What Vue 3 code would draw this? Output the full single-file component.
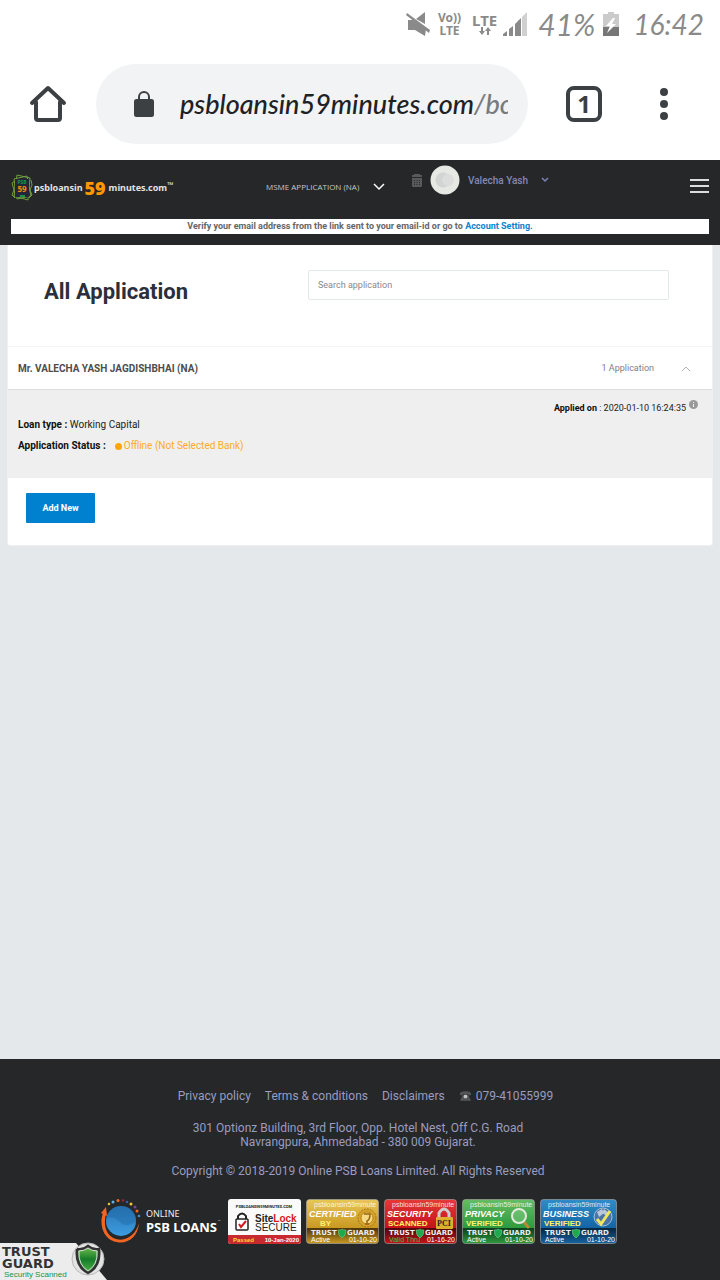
<script setup>
import { ref } from 'vue'

const query = ref('')
const expanded = ref(true)

const seals = [
  { id: 'cert', top: 'CERTIFIED', sub: 'BY', state: 'Active', date: '01-10-20', light: '#e9c659', mid: '#c99a22', dark: '#4d3508' },
  { id: 'sec', top: 'SECURITY', sub: 'SCANNED', state: 'Valid Thru', date: '01-16-20', light: '#e5393a', mid: '#c4131a', dark: '#4c0808' },
  { id: 'priv', top: 'PRIVACY', sub: 'VERIFIED', state: 'Active', date: '01-10-20', light: '#66bd65', mid: '#2f9a3e', dark: '#0b3f1d' },
  { id: 'biz', top: 'BUSINESS', sub: 'VERIFIED', state: 'Active', date: '01-10-20', light: '#2f8dc9', mid: '#1565a3', dark: '#08263f' },
]
</script>

<template>
  <div class="screen">
    <div class="status">
      <svg width="24" height="24" viewBox="0 0 24 24" aria-label="Muted" fill="#8a8a8a">
        <path d="M10 7 19 0v12z" />
        <path d="M2 8h5l13 9-1 7-10-6H2z" />
        <path d="m0 3 1-2 23 17-1 3z" />
      </svg>
      <div class="volte"><span>Vo))</span><span>LTE</span></div>
      <div class="lte">
        <span>LTE</span>
        <svg width="14" height="8" viewBox="0 0 14 8"><path d="M3 0h2v4h2L4 8 1 4h2zM9 8h2V4h2l-3-4-3 4h2z" fill="#8a8a8a" /></svg>
      </div>
      <svg class="signal" width="24" height="24" viewBox="0 0 24 24">
        <path d="M0 24v-2l4-3v5zM6 24v-7l4-3v10zM12 24V12l4-4v16z" fill="#8a8a8a" />
        <path d="M15 24V9l3-3v18z" fill="#8a8a8a" />
        <path d="M19 24V5l5-5v24z" fill="#d0d0d0" />
        <path d="M5 16v8M11 12v12" stroke="#fff" stroke-width="1.5" />
      </svg>
      <span class="hand percent">41%</span>
      <svg width="16" height="24" viewBox="0 0 16 24">
        <path d="M0 2h5V0h6v2h5v22H0z" fill="#cbcbcb" />
        <path d="M0 15h16v9H0z" fill="#777" />
        <path d="m10 6-7 8h4l-3 7 9-9H9l3-6z" fill="#fff" />
      </svg>
      <span class="hand clock">16:42</span>
    </div>

    <div class="toolbar">
      <button class="icon home" aria-label="Home">
        <svg width="40" height="40" viewBox="0 0 40 40" fill="none" stroke="#3c4043" stroke-width="4" stroke-linejoin="round" stroke-linecap="round">
          <path d="M8 18v16q0 2 2 2h20q2 0 2-2V18" /><path d="M4 19 20 4l16 15" />
        </svg>
      </button>
      <div class="omnibox">
        <svg width="20" height="26" viewBox="0 0 20 26"><rect y="8" width="20" height="18" rx="2.5" fill="#3c4043" /><path d="M5 9V6a5 5 0 0 1 10 0v3" fill="none" stroke="#3c4043" stroke-width="2" /></svg>
        <span class="url"><span>psbloansin59minutes.com</span><span class="path">/bo</span></span>
      </div>
      <button class="tabs" aria-label="Tabs">1</button>
      <button class="icon more" aria-label="More">
        <svg width="8" height="32" viewBox="0 0 8 32" fill="#3c4043"><circle cx="4" cy="4" r="4" /><circle cx="4" cy="16" r="4" /><circle cx="4" cy="28" r="4" /></svg>
      </button>
    </div>

    <header>
      <div class="nav">
        <a href="#" class="brand">
          <svg width="22" height="28" viewBox="0 0 22 28">
            <g fill="none" stroke="#6f9f3e"><path d="m3 5 13-3 4 20-14 3zM6 1l13 3-2 22-14-4z" /><path d="m1 9 3-2v17l-3-3 2-5zM20 6l1 5-2 5 2 5-3 3" /></g>
            <path d="M4 5h14v18H4z" fill="#24253b" />
            <text x="11" y="10" text-anchor="middle" font-size="5" fill="#179646">PSB</text>
            <text x="11" y="18" text-anchor="middle" font-size="8" font-weight="700" fill="#fb8c00">59</text>
            <path d="M9 22h5" stroke="#179646" stroke-width="2" />
          </svg>
          <span class="word">psbloansin</span><b>59</b><span class="word">minutes.com</span><sup>™</sup>
        </a>
        <button class="menu msme">
          <span>MSME APPLICATION (NA)</span>
          <svg width="12" height="8" viewBox="0 0 12 8" fill="none" stroke="#fff" stroke-width="1.500"><path d="m1 1 5 5 5-5" /></svg>
        </button>
        <div class="account">
          <svg width="10" height="13" viewBox="0 0 10 13"><path d="M2 0h6v1h2v2H0V1h2zM0 4h10v8q0 1-1 1H1q-1 0-1-1z" fill="#59595b" /><path d="M2 6.500h6M2 8.500h6M2 10.500h6" stroke="#2b2c2e" stroke-dasharray="1 1.500" /></svg>
          <svg width="30" height="30" viewBox="0 0 30 30"><circle cx="15" cy="15" r="14.500" fill="#e6e8e4" /><circle cx="13" cy="15" r="7.500" fill="#d2d3d3" /><circle cx="18" cy="15" r="6" fill="#dddcdd" /></svg>
          <button class="menu user">
            <span>Valecha Yash</span>
            <svg width="8" height="6" viewBox="0 0 8 6" fill="none" stroke="#7f82b5" stroke-width="1.500"><path d="m1 1 3 3 3-3" /></svg>
          </button>
        </div>
        <button class="burger" aria-label="Menu"><i></i><i></i><i></i></button>
      </div>
      <p class="notice">Verify your email address from the link sent to your email-id or go to <a href="#">Account Setting.</a></p>
    </header>

    <main>
      <section class="panel">
        <div class="head">
          <h1>All Application</h1>
          <input v-model="query" type="text" placeholder="Search application" aria-label="Search application" />
        </div>
        <div class="row">
          <h2>Mr. VALECHA YASH JAGDISHBHAI (NA)</h2>
          <span class="count">1 Application</span>
          <button class="icon" aria-label="Toggle applications" @click="expanded = !expanded">
            <svg width="10" height="7" viewBox="0 0 10 7" fill="none" stroke="#b5b5b5"><path d="m1 6 4-4 4 4" /></svg>
          </button>
        </div>
        <div v-if="expanded" class="detail">
          <p class="applied"><span><b>Applied on</b> : 2020-01-10 16:24:35</span>
            <svg width="9" height="9" viewBox="0 0 9 9"><circle cx="4.500" cy="4.500" r="4.500" fill="#999" /><path d="M4.500 2v1M4.500 4v3" stroke="#eee" /></svg>
          </p>
          <p class="loan"><b>Loan type :</b> Working Capital</p>
          <p class="state"><b>Application Status :</b><span class="offline"><i></i>Offline (Not Selected Bank)</span></p>
        </div>
        <div class="foot"><button class="add">Add New</button></div>
      </section>
    </main>

    <footer>
      <nav>
        <a href="#">Privacy policy</a><a href="#">Terms &amp; conditions</a><a href="#">Disclaimers</a>
        <a href="#" class="phone">
          <svg width="13" height="10" viewBox="0 0 14 10"><path d="M1 4Q0 0 7 0t6 4l-3 .5V3H4v1.500z" fill="#555" /><path d="M4 4h6l3 6H1z" fill="#555" /><circle cx="7" cy="5.500" r="2" fill="#c2c2c2" /></svg>079-41055999</a>
      </nav>
      <p class="address">301 Optionz Building, 3rd Floor, Opp. Hotel Nest, Off C.G. Road<br />Navrangpura, Ahmedabad - 380 009 Gujarat.</p>
      <p class="copy">Copyright © 2018-2019 Online PSB Loans Limited. All Rights Reserved</p>
      <div class="badges">
        <svg class="psb" width="123" height="46" viewBox="0 0 123 46">
          <defs><linearGradient id="globe" x2="0" y2="1"><stop stop-color="#2b75b5" /><stop offset="1" stop-color="#3c9ce0" /></linearGradient></defs>
          <circle cx="21" cy="22" r="15" fill="url(#globe)" />
          <path d="M6 19q9-2 14 4t16 0q1-12-9-15-17-3-21 11" fill="#1c659f" opacity=".4" />
          <path d="M3 14C-1 25 3 38 13 42c13 5 25-3 26-18-3 11-12 19-23 16C6 37 3 26 6 15z" fill="#f26522" />
          <path d="m1 14 5-6 1 9z" fill="#f26522" />
          <g><circle cx="9" cy="5" r="1.300" fill="#dec832" /><circle cx="13" cy="3" r="1.500" fill="#62b1de" /><circle cx="18" cy="1.500" r="1.500" fill="#f36d21" /><circle cx="23" cy="1.500" r="1.300" fill="#9d2335" /><circle cx="27" cy="3" r="1.300" fill="#2d61bf" /><circle cx="31" cy="5" r="1.500" fill="#efc931" /><circle cx="35" cy="8" r="1.500" fill="#7b419c" /><circle cx="37" cy="12" r="1.500" fill="#f26522" /><circle cx="39" cy="17" r="1.300" fill="#3991d2" /></g>
          <text x="46" y="18" class="t-online">ONLINE</text>
          <text x="46" y="33" class="t-psb">PSB LOANS</text>
          <text x="118" y="24" font-size="4" fill="#ddd">™</text>
        </svg>
        <svg width="73" height="45" viewBox="0 0 73 45">
          <defs><clipPath id="card"><rect width="73" height="45" rx="3" /></clipPath></defs>
          <g clip-path="url(#card)">
            <path d="M0 0h73v45H0z" fill="#fafafa" /><path d="M0 36h73v9H0z" fill="#c72a2f" />
          </g>
          <text x="36" y="9" text-anchor="middle" class="t-domain">PSBLOANSIN59MINUTES.COM</text>
          <rect x="8" y="20" width="12" height="11" rx="1" fill="#fff" stroke="#222" stroke-width="1.500" /><path d="M10 20v-3q4-5 8 0v3" fill="none" stroke="#222" stroke-width="2" /><path d="m11 25 2 3 5-6" fill="none" stroke="#d71920" stroke-width="2" />
          <text x="27" y="23" class="t-site">Site<tspan fill="#d71920">Lock</tspan></text>
          <text x="27" y="32" class="t-secure">SECURE</text>
          <text x="5" y="43" class="t-pass" fill="#ffd83b">Passed</text>
          <text x="71" y="43" text-anchor="end" class="t-pass" fill="#fff">10-Jan-2020</text>
        </svg>
        <svg v-for="s in seals" :key="s.id" :width="s.id === 'biz' ? 77 : 73" height="45" :viewBox="s.id === 'biz' ? '0 0 77 45' : '0 0 73 45'">
          <defs><linearGradient :id="s.id" x2="0" y2="1"><stop :stop-color="s.light" /><stop offset=".64" :stop-color="s.mid" /><stop offset=".66" :stop-color="s.dark" /><stop offset="1" :stop-color="s.mid" /></linearGradient></defs>
          <rect x=".5" y=".5" :width="s.id === 'biz' ? 76 : 72" height="44" rx="3" :fill="`url(#${s.id})`" stroke="#aaa" stroke-opacity=".6" />
          <text x="8" y="8" class="t-host">psbloansin59minute</text>
          <g v-if="s.id === 'cert'"><circle cx="61" cy="19" r="9" fill="#d5a22b" stroke="#a77412" stroke-dasharray="2 1" /><circle cx="61" cy="19" r="6" fill="#f5d985" stroke="#b98516" /><path d="M58 15h6q0 6-3 7v2M59 25h4" fill="none" stroke="#95640d" stroke-width="1.500" /></g>
          <g v-else-if="s.id === 'sec'"><path d="M55 20v-6q5-8 10 0v6" fill="none" stroke="#ccc" stroke-width="3" /><rect x="52" y="18" width="17" height="12" rx="1" fill="#ddb12f" /><text x="60" y="27" text-anchor="middle" class="t-pci">PCI</text></g>
          <g v-else-if="s.id === 'priv'"><path d="m62 23 5 6" stroke="#b78836" stroke-width="3" /><circle cx="57" cy="17" r="7" fill="#7fce83" fill-opacity=".5" stroke="#e4e9dd" stroke-width="2" /></g>
          <g v-else><circle cx="63" cy="18" r="9" fill="#4b75aa" stroke="#a8bfd6" /><path d="m57 13 5-3 2 4-5 4zM64 10l5 4-2 3-5-3z" fill="#b8c8d7" /><path d="m57 20 4 5 9-13" fill="none" stroke="#f2e65a" stroke-width="3" /></g>
          <text x="3" y="18" class="t-seal">{{ s.top }}</text>
          <text :x="s.id === 'cert' ? 14 : 4" y="27" class="t-sub">{{ s.sub }}</text>
          <text x="5" y="36" class="t-guard">TRUST</text><text x="41" y="36" class="t-guard">GUARD</text>
          <path d="M32 31q4 0 4-1 1 1 4 1 0 6-4 8-4-2-4-8" fill="#20a94c" stroke="#86d3a0" stroke-width=".5" />
          <text x="5" y="43" class="t-meta" :fill="s.id === 'sec' ? '#35c352' : '#fff'">{{ s.state }}</text>
          <text :x="s.id === 'biz' ? 75 : 71" y="43" text-anchor="end" class="t-meta" fill="#fff">{{ s.date }}</text>
        </svg>
      </div>
    </footer>

    <svg class="trust" width="108" height="38" viewBox="0 0 108 38">
      <defs><linearGradient id="shield" x2="0" y2="1"><stop stop-color="#75c34d" /><stop offset=".5" stop-color="#167c2a" /><stop offset="1" stop-color="#4eb947" /></linearGradient></defs>
      <path d="M0 1h76l31 37H0z" fill="#ececec" />
      <circle cx="88" cy="17" r="16" fill="#e3e3e3" stroke="#b8b8b8" />
      <path d="M77 7q7 1 11-3 4 4 11 3 2 17-11 24Q75 24 77 7" fill="url(#shield)" stroke="#333" stroke-width="2.500" />
      <path d="M79 9q5 0 9-3 4 3 9 3 1 14-9 20-10-6-9-20" fill="none" stroke="#ddd" />
      <text x="2" y="14" class="t-trust">TRUST</text><text x="2" y="26" class="t-trust">GUARD</text>
      <text x="4" y="35" class="t-scan">Security Scanned</text>
    </svg>
  </div>
</template>

<style>
body { background: #e4e8eb; }
</style>

<style scoped>
* { box-sizing: border-box; }
p, h1, h2 { margin: 0; }
button { border: 0; padding: 0; background: none; font: inherit; color: inherit; cursor: pointer; }
a { text-decoration: none; color: inherit; }
svg { display: block; flex: none; }
.screen { position: relative; min-height: 100vh; display: flex; flex-direction: column; font-family: Roboto, "Liberation Sans", sans-serif; font-size: 10px; color: #333; }

.status { height: 48px; background: #fff; display: flex; align-items: center; justify-content: flex-end; padding-right: 16px; color: #8a8a8a; }
.volte, .lte { display: flex; flex-direction: column; align-items: center; font-family: "Noto Sans", sans-serif; font-weight: 700; }
.volte { margin: 0 11px 0 8px; font-size: 12px; line-height: 13px; }
.lte { font-size: 15px; line-height: 14px; }
.signal { margin-left: 6px; }
.hand { font-family: Lato, sans-serif; font-style: italic; line-height: 32px; }
.percent { font-size: 30px; margin: 0 8px 0 11px; }
.clock { font-size: 28px; margin-left: 14px; }

.toolbar { height: 112px; background: #fff; display: flex; align-items: center; padding: 0 56px 0 28px; }
.omnibox { flex: 1; min-width: 0; height: 80px; margin: 0 38px 0 28px; padding: 0 20px 0 38px; border-radius: 40px; background: #f1f3f4; display: flex; align-items: center; gap: 26px; }
.url { flex: 1; min-width: 0; overflow: hidden; white-space: nowrap; font: italic 500 27px/36px Lato, sans-serif; color: #202124; }
.path { color: #777b7e; }
.tabs { width: 36px; height: 36px; border: 4px solid #3c4043; border-radius: 8px; color: #3c4043; font: 700 24px/28px "Noto Sans", sans-serif; margin-right: 58px; }
.toolbar { padding-right: 52px; }

header { background: #252729; height: 85px; padding: 0 11px; display: flex; flex-direction: column; }
.nav { height: 59px; display: grid; grid-template-columns: 255px 146px 1fr auto; align-items: start; }
.brand { display: flex; align-items: center; margin-top: 14px; color: #e4e4e4; font: 700 9px/28px "Noto Sans", sans-serif; }
.brand b { color: #ff9800; font: 800 18px/28px "Open Sans", sans-serif; margin: 0 2px; }
.brand .word { margin-left: 1px; }
.brand sup { font-size: 8px; line-height: 10px; align-self: start; margin-top: 6px; }
.menu { display: flex; align-items: center; white-space: nowrap; }
.msme { margin-top: 19px; color: #c8c8c8; font: 8px/16px "Open Sans", sans-serif; justify-content: space-between; width: 119px; }
.account { display: flex; align-items: center; gap: 8px; height: 40px; }
.user { color: #8688b5; font-weight: 500; gap: 13px; }
.burger { width: 19px; margin-top: 19px; display: grid; gap: 4px; }
.burger i { height: 2px; background: #ddd; }
.notice { height: 15px; background: #fff; text-align: center; font-weight: 700; font-size: 9px; line-height: 15px; color: #666; }
.notice a { color: #0a83ce; }

main { flex: 1; background: #e4e8eb; padding: 0 7px; }
.panel { background: #fff; border: 1px solid #eef0f2; border-top: 0; border-radius: 0 0 3px 3px; }
.head { height: 102px; padding: 25px 43px 0 36px; display: grid; grid-template-columns: 264px 1fr; align-items: start; border-bottom: 1px solid #f5f5f5; }
h1 { font-size: 22px; line-height: 44px; font-weight: 700; color: #2b2f3a; }
input { width: 100%; height: 30px; border: 1px solid #e3e8e8; border-radius: 2px; padding: 0 9px; font: 9px Roboto, sans-serif; color: #555; background: #fff; }
input::placeholder { color: #888; opacity: 1; }
.row { height: 43px; padding: 0 21px 0 10px; display: flex; align-items: center; border-bottom: 1px solid #ddd; }
h2 { font-size: 10px; font-weight: 700; color: #4d4d4d; flex: 1; }
.count { font-size: 9px; color: #808080; margin-right: 27px; }
.detail { background: #efefef; height: 88px; padding: 10px 14px 0 10px; color: #222; line-height: 16px; }
.applied { display: flex; justify-content: flex-end; gap: 3px; font-size: 9px; }
.applied b, .loan b, .state b { color: #111; font-weight: 700; }
.loan { margin-top: 1px; }
.state { margin-top: 5px; display: flex; align-items: center; }
.offline { display: flex; align-items: center; gap: 2px; margin-left: 9px; color: #ffab26; }
.offline i { width: 7px; height: 7px; border-radius: 50%; background: #ffa50a; }
.foot { padding: 15px 18px 22px; }
.add { display: block; width: 69px; height: 30px; background: #0081cf; color: #fff; font-weight: 700; font-size: 9px; border-radius: 1px; }

footer { min-height: 221px; background: #252729; color: #9a9cc0; font-size: 12px; line-height: 14px; padding-top: 30px; text-align: center; }
nav { display: flex; justify-content: center; gap: 14px; margin-left: 11px; }
.phone { display: flex; align-items: center; gap: 4px; }
.address { margin-top: 18px; padding-right: 4px; }
.copy { margin-top: 15px; padding-right: 4px; }
.badges { display: flex; gap: 5px; margin-top: 21px; justify-content: center; padding-right: 3px; }
.t-online { font: 9px "Noto Sans", sans-serif; fill: #eee; }
.t-psb { font: 700 13px "Noto Sans", sans-serif; fill: #fff; }
.t-domain { font: 700 4px Roboto, sans-serif; fill: #222; }
.t-site { font: 700 10px "Liberation Sans", sans-serif; fill: #222; }
.t-secure { font: 10px "Liberation Sans", sans-serif; fill: #222; }
.t-pass { font: 700 6px "Liberation Sans", sans-serif; }
.t-host { font: 7px "Liberation Sans", sans-serif; fill: #fff; fill-opacity: .85; }
.t-seal { font: italic 700 9px "Liberation Sans", sans-serif; fill: #fff; }
.t-sub { font: 700 8px "Liberation Sans", sans-serif; fill: #fff36c; }
.t-pci { font: 700 8px "Liberation Serif", serif; fill: #222; }
.t-guard { font: 700 7px "DejaVu Sans", sans-serif; fill: #eee; }
.t-meta { font: 7px "Liberation Sans", sans-serif; }
.t-trust { font: 700 13px "DejaVu Sans", sans-serif; fill: #333; }
.t-scan { font: 8px "Liberation Sans", sans-serif; fill: #129447; }
.trust { position: absolute; left: 0; bottom: 0; }
</style>
